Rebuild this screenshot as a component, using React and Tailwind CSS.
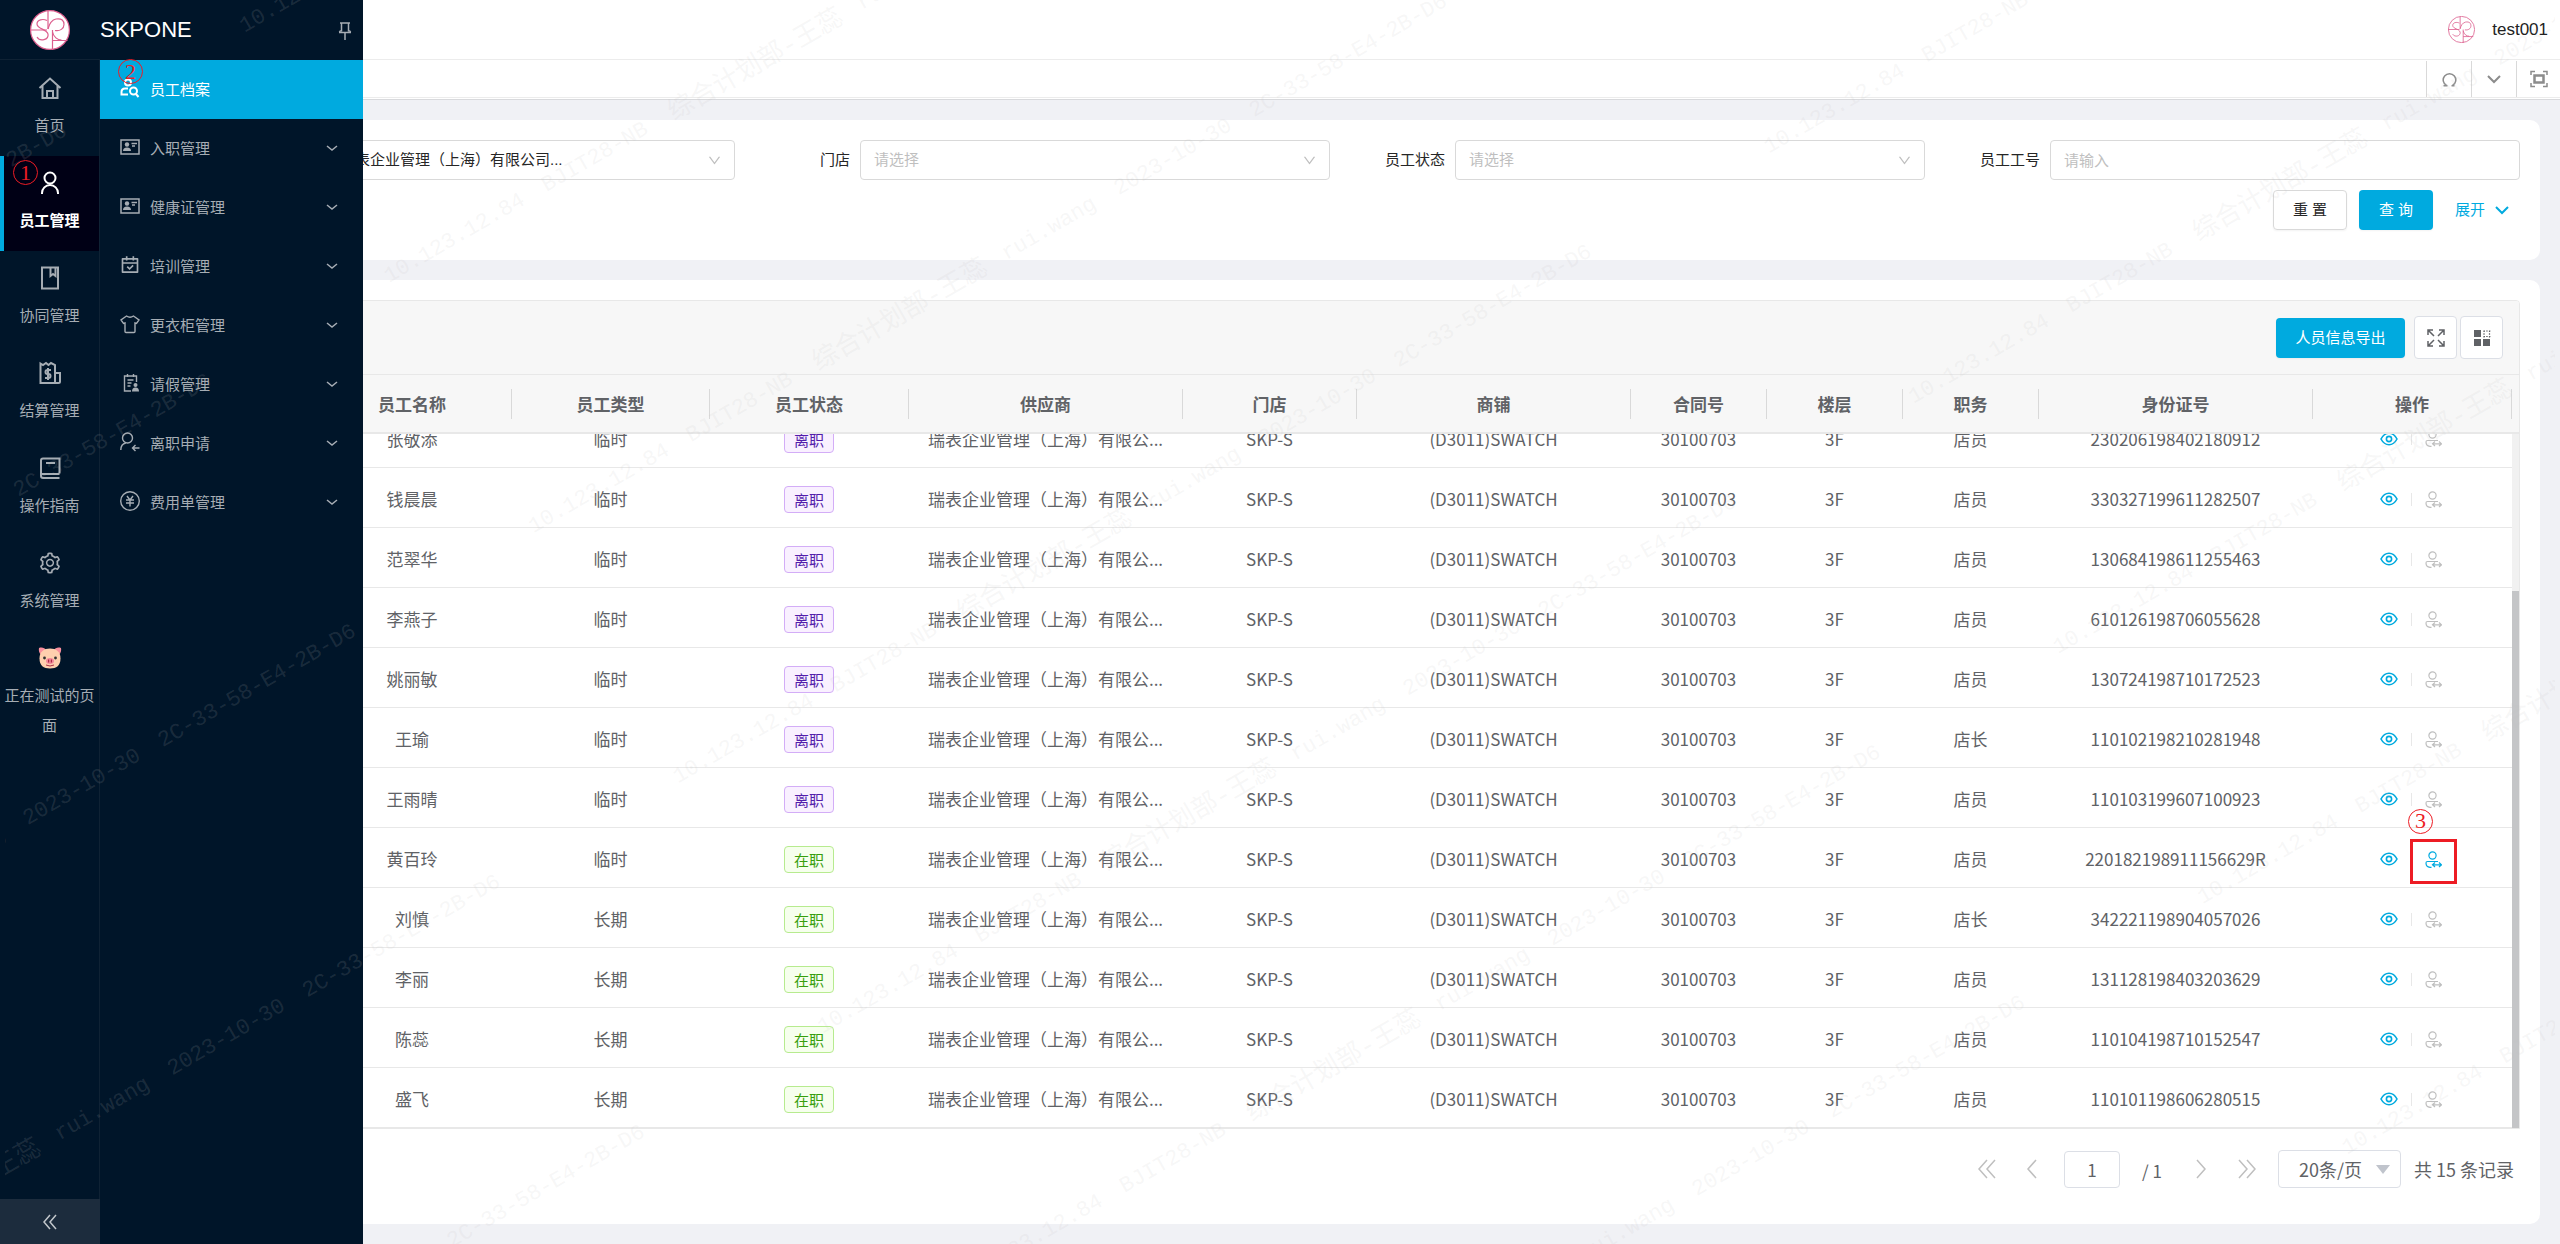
import React from "react";
import { AiOutlineSetting, AiOutlineDown } from "react-icons/ai";
import { RiCalendarCheckLine } from "react-icons/ri";

const rows = [
    ["张敬添", "临时", "离职", "店员", "230206198402180912"],
    ["钱晨晨", "临时", "离职", "店员", "330327199611282507"],
    ["范翠华", "临时", "离职", "店员", "130684198611255463"],
    ["李燕子", "临时", "离职", "店员", "610126198706055628"],
    ["姚丽敏", "临时", "离职", "店员", "130724198710172523"],
    ["王瑜", "临时", "离职", "店长", "110102198210281948"],
    ["王雨晴", "临时", "离职", "店员", "110103199607100923"],
    ["黄百玲", "临时", "在职", "店员", "220182198911156629R"],
    ["刘慎", "长期", "在职", "店长", "342221198904057026"],
    ["李丽", "长期", "在职", "店员", "131128198403203629"],
    ["陈蕊", "长期", "在职", "店员", "110104198710152547"],
    ["盛飞", "长期", "在职", "店员", "110101198606280515"],
];

const columns = ["员工名称", "员工类型", "员工状态", "供应商", "门店", "商铺", "合同号", "楼层", "职务", "身份证号", "操作"];

function Svg({ size = 24, box = 24, width = 2, children }) {
    return (
        <svg width={size} height={size} viewBox={`0 0 ${box} ${box}`} fill="none" stroke="currentColor" strokeWidth={width} aria-hidden="true">
            {children}
        </svg>
    );
}

function Logo({ size }) {
    return (
        <svg width={size} height={size} viewBox="0 0 40 40" fill="none" stroke="#dc5f8e" strokeWidth="1.200" aria-hidden="true">
            <circle cx="20" cy="20" r="19.400" fill="#fff" />
            <path d="M18 1v18M0 20h17M22.500 20v20M22.500 30.500h15" />
            <path d="M17 10.500c-4-2-10-1-10 3.500 0 5 10 5 11 10 1 6-8 8-11 3" />
            <path d="M18 19c1-4 3-9 8-10 6-1 8 2 8 5.500 0 4-4 7-9 6M22.500 22c1 5 5 8 9 8" />
        </svg>
    );
}

const icons = {
    home: (
        <Svg>
            <path d="M1.500 12 12 2.500 22.500 12M4.500 10v12h15V10M9 22v-7h6v7" />
        </Svg>
    ),
    user: (
        <Svg>
            <circle cx="12" cy="7" r="5.500" />
            <path d="M4 23v-1a8 8 0 0 1 16 0v1" />
        </Svg>
    ),
    bookmark: (
        <Svg>
            <path d="M4 1.500h16v21H4zM12.500 2v8l2.500-2 2.500 2V2" />
        </Svg>
    ),
    bill: (
        <Svg>
            <path d="M2.500 2.500 5 4l3-2 2.500 2 2.500-2 4 2v18H2.500zM17 12h5v8.500q0 1.500-1.500 1.500H17" />
            <path d="M13 9H9.500a1.500 1.500 0 0 0 0 4h1a1.500 1.500 0 0 1 0 4H7M10 7v12" />
        </Svg>
    ),
    book: (
        <Svg>
            <path d="M21.500 17.500V2.500H5q-2 0-2 2V20q0 2 2 2h16.500M3 18h18.500M8 7h9" />
        </Svg>
    ),
    setting: <AiOutlineSetting size={24} />,
    pig: (
        <svg width="24" height="24" viewBox="0 0 24 24" aria-hidden="true">
            <path d="M1 2c3-1 6 0 7 2L3 9C1 7 .500 4 1 2zM23 2c-3-1-6 0-7 2l5 5c2-2 2.500-5 2-7z" fill="#f98e9d" />
            <path d="M12 2.500c6 0 10.500 3 10.500 10 0 7-4 10-10.500 10s-10.500-3-10.500-10c0-7 4.500-10 10.500-10z" fill="#ffcfae" />
            <circle cx="6.500" cy="12" r="1.400" fill="#333" />
            <circle cx="17.500" cy="12" r="1.400" fill="#333" />
            <ellipse cx="12" cy="15" rx="4" ry="3" fill="#f4889a" />
            <path d="M10.600 13.500v3M13.400 13.500v3" stroke="#a92c45" strokeWidth="1.200" />
            <path d="M8 19q4 2 8 0" stroke="#a92c45" fill="none" />
        </svg>
    ),
    search: (
        <Svg size={20} box={20}>
            <circle cx="8" cy="4.500" r="3" />
            <path d="M8 10.500H5q-3.500 0-3.500 3.500v2.500H8" />
            <circle cx="13.500" cy="13" r="3.500" />
            <path d="m16 16 2.500 3" />
        </Svg>
    ),
    card: (
        <Svg size={20} box={20} width={1.500}>
            <path d="M1 3h18v14H1zM11.500 6.500H17M12 9h3" />
            <circle cx="7" cy="7.500" r="2.200" fill="currentColor" stroke="none" />
            <path d="M3 14q0-3.500 4-3.500t4 3.500z" fill="currentColor" stroke="none" />
        </Svg>
    ),
    calendar: <RiCalendarCheckLine size={21} />,
    shirt: (
        <Svg size={20} box={20} width={1.400}>
            <path d="M6.500 2q3.500 2.500 7 0l5.500 4-2.500 3.500-1.500-.500V17.500q0 1-1 1H6q-1 0-1-1V9l-1.500.500L1 6z" />
        </Svg>
    ),
    leave: (
        <Svg size={20} box={20} width={1.400}>
            <path d="M11 18H4.500V3h12v6M7.500 7h6M7.500 10h4M7.500 13h3M7.500 1v3M13.500 1v3" />
            <circle cx="15.500" cy="12" r="2" fill="currentColor" stroke="none" />
            <path d="M12 18.500q0-4 3.500-4t3.500 4z" fill="currentColor" stroke="none" />
        </Svg>
    ),
    quit: (
        <Svg size={20} box={20} width={1.400}>
            <circle cx="7.500" cy="6" r="5" />
            <path d="M.800 18q0-6 5-7M19.500 16H13M15.500 13l-3 3 3 3" />
        </Svg>
    ),
    yuan: (
        <Svg size={20} box={20} width={1.400}>
            <circle cx="10" cy="10" r="9.300" />
            <path d="m7 5 3 4 3-4M6 9h8M6 12h8M10 9v6.500" />
        </Svg>
    ),
};

const modules = [
    ["home", "首页"],
    ["user", "员工管理"],
    ["bookmark", "协同管理"],
    ["bill", "结算管理"],
    ["book", "操作指南"],
    ["setting", "系统管理"],
    ["pig", "正在测试的页面"],
];

const menus = [
    ["search", "员工档案"],
    ["card", "入职管理"],
    ["card", "健康证管理"],
    ["calendar", "培训管理"],
    ["shirt", "更衣柜管理"],
    ["leave", "请假管理"],
    ["quit", "离职申请"],
    ["yuan", "费用单管理"],
];

// numbered red step marker
function Step({ n, className }) {
    return (
        <span className={`absolute z-10 flex h-[25px] w-[25px] items-center justify-center rounded-full border border-[#ed1c24] font-['Liberation_Serif',serif] text-[22px] leading-none font-normal text-[#ed1c24] ${className}`}>
            {n}
        </span>
    );
}

function Sidebar() {
    return (
        <aside className="relative z-20 flex w-[100px] shrink-0 flex-col bg-[#001529] text-[15px] text-[#a6adb4]">
            <div className="flex h-[60px] items-center justify-center border-b border-[#0f2234]">
                <Logo size={40} />
            </div>
            <nav className="flex-1 border-r border-[#0f2234] pt-px">
                {modules.map(([icon, label], i) => (
                    <a
                        key={label}
                        href="#"
                        className={
                            i === 1
                                ? "relative flex min-h-[95px] flex-col items-center bg-[#000015] pt-[15px] font-bold text-white"
                                : "flex min-h-[95px] flex-col items-center px-1 pt-[15px]"
                        }
                    >
                        {i === 1 && <span className="absolute inset-y-0 left-0 w-1 bg-[#00aadf]" />}
                        {i === 1 && <Step n="1" className="top-[4px] left-[13px]" />}
                        {icons[icon]}
                        <span className="mt-[11px] text-center leading-[30px]">{label}</span>
                    </a>
                ))}
            </nav>
            <button aria-label="收起" className="flex h-[45px] items-center justify-center bg-[#1c2c3d] text-[#c2c7cc]">
                <Svg size={18} box={18} width={1.500}>
                    <path d="M9 2 3 9l6 7M15 2 9 9l6 7" />
                </Svg>
            </button>
            <div className="absolute inset-y-0 left-full w-[263px] bg-[#001529]">
                <div className="flex h-[60px] items-center justify-between border-b border-[#001529] pr-[9px]">
                    <h1 className="text-[22px] leading-[30px] text-white">SKPONE</h1>
                    <button aria-label="固定" className="pt-[2px]">
                        <Svg size={18} box={18} width={1.500}>
                            <path d="M4 1h10M5.500 1v8.500M12.500 1v8.500M3 10.500h12M3.500 10q0-1 2-1.500M14.500 10q0-1-2-1.500M9 11v7" />
                        </Svg>
                    </button>
                </div>
                <nav>
                    {menus.map(([icon, label], i) => (
                        <a
                            key={label}
                            href="#"
                            className={
                                i === 0
                                    ? "relative flex h-[59px] items-center bg-[#00aadf] px-5 pt-px text-white"
                                    : "flex h-[59px] items-center pt-px pr-[25px] pl-5"
                            }
                        >
                            {i === 0 && <Step n="2" className="-top-px left-[18px]" />}
                            <span className="mr-[10px] flex w-5 justify-center pb-1">{icons[icon]}</span>
                            <span className="flex-1">{label}</span>
                            {i > 0 && (
                                <Svg size={12} box={12} width={1.500}>
                                    <path d="m1 3 5 4 5-4" />
                                </Svg>
                            )}
                        </a>
                    ))}
                </nav>
            </div>
        </aside>
    );
}

function TopBar() {
    return (
        <>
            <header className="flex h-[60px] items-center justify-end border-b border-[#ececec] bg-white pr-3">
                <Logo size={27} />
                <span className="ml-[17px] text-[17px] text-[#222]">test001</span>
            </header>
            <div className="flex h-[40px] items-start justify-end border-b border-[#d8d9dc] bg-white pt-px text-[#8c8c8c]">
                <div className="flex h-[37px] w-full justify-end border-b border-[#ececec]">
                    <button aria-label="刷新" className="flex w-[45px] items-center justify-center border-l border-[#d9d9d9]">
                        <Svg size={15} box={15} width={1.500}>
                            <path d="M4.500 13.500a6.300 6.300 0 1 1 6 0M1.500 13.700h4M9.500 13.700h3" />
                        </Svg>
                    </button>
                    <button aria-label="更多" className="flex w-[45px] items-center justify-center border-l border-[#d9d9d9]">
                        <Svg size={14} box={14}>
                            <path d="m1 4 6 6 6-6" />
                        </Svg>
                    </button>
                    <button aria-label="全屏" className="flex w-[44px] items-center justify-center border-l border-[#d9d9d9]">
                        <Svg size={18} box={18} width={1.500}>
                            <path d="M1 5V1.500h4M13 1.500h4V5M17 13v3.500h-4M5 16.500H1V13" />
                            <path d="M4.500 5.500h9v7h-9z" strokeWidth="2.500" />
                        </Svg>
                    </button>
                </div>
            </div>
        </>
    );
}

function SelectField({ id, label, value, className = "pl-[13px] text-[#bfbfbf]" }) {
    return (
        <div className="flex items-center">
            <label htmlFor={id} className="w-[125px] shrink-0 pr-[10px] text-right">{label}</label>
            <div className="relative flex-1">
                <select id={id} className={`h-10 w-full appearance-none rounded border border-[#d9d9d9] bg-white pr-10 ${className}`}>
                    <option>{value}</option>
                </select>
                <AiOutlineDown size={15} className="pointer-events-none absolute top-[13px] right-[13px] text-[#bfbfbf]" />
            </div>
        </div>
    );
}

function FilterCard() {
    return (
        <section className="h-[140px] rounded-[10px] bg-white p-5 text-[15px] text-[#262626]">
            <div className="grid grid-cols-4">
                <SelectField id="supplier" label="供应商" value="瑞表企业管理（上海）有限公司..." className="pl-[74px]" />
                <SelectField id="store" label="门店" value="请选择" />
                <SelectField id="state" label="员工状态" value="请选择" />
                <div className="flex items-center">
                    <label htmlFor="code" className="w-[125px] shrink-0 pr-[10px] text-right">员工工号</label>
                    <input id="code" placeholder="请输入" className="h-10 min-w-0 flex-1 rounded border border-[#d9d9d9] px-[13px] placeholder:text-[#bfbfbf]" />
                </div>
            </div>
            <div className="mt-[10px] flex items-center justify-end pr-[11px]">
                <button className="h-10 w-[74px] rounded border border-[#d9d9d9] shadow-xs">重 置</button>
                <button className="ml-3 h-10 w-[74px] rounded bg-[#00aadf] text-white shadow-xs">查 询</button>
                <button className="ml-[22px] flex items-center gap-[10px] text-[#00aadf]">
                    展开
                    <Svg size={14} box={14}>
                        <path d="m1 4 6 6 6-6" />
                    </Svg>
                </button>
            </div>
        </section>
    );
}

function Cols() {
    return (
        <colgroup>
            <col />
            <col className="w-[199px]" />
            <col className="w-[198px]" />
            <col className="w-[199px]" />
            <col className="w-[274px]" />
            <col className="w-[174px]" />
            <col className="w-[274px]" />
            <col className="w-[136px]" />
            <col className="w-[136px]" />
            <col className="w-[136px]" />
            <col className="w-[274px]" />
            <col className="w-[199px]" />
        </colgroup>
    );
}

function Row({ row }) {
    const [name, type, state, job, idNo] = row;
    const active = name === "黄百玲";
    return (
        <tr className="h-[60px] border-b border-[#e8e8e8] *:pt-[3px] *:pr-px">
            <td />
            <td>{name}</td>
            <td>{type}</td>
            <td>
                <span
                    className={
                        state === "离职"
                            ? "inline-block h-[27px] w-[50px] rounded border border-[#d3adf7] bg-[#f9f0ff] align-middle text-[15px] leading-[25px] text-[#531dab]"
                            : "inline-block h-[27px] w-[50px] rounded border border-[#b7eb8f] bg-[#f6ffed] align-middle text-[15px] leading-[25px] text-[#389e0d]"
                    }
                >
                    {state}
                </span>
            </td>
            <td>瑞表企业管理（上海）有限公...</td>
            <td>SKP-S</td>
            <td>(D3011)SWATCH</td>
            <td>30100703</td>
            <td>3F</td>
            <td>{job}</td>
            <td>{idNo}</td>
            <td>
                <div className="flex items-center justify-center pr-[2px]">
                    <button aria-label="查看" className="text-[#00aadf]">
                        <Svg size={18} box={18} width={1.600}>
                            <path d="M1 9q3-5.700 8-5.700T17 9q-3 5.700-8 5.700T1 9z" />
                            <circle cx="9" cy="9" r="2.600" />
                        </Svg>
                    </button>
                    <span className="mx-[13px] h-[13px] w-px bg-[#e8e8e8]" />
                    <button aria-label="变更" className={active ? "relative text-[#00aadf]" : "relative text-[#bfbfbf]"}>
                        <Svg size={17} box={17} width={1.200}>
                            <circle cx="7.500" cy="4.500" r="3.600" />
                            <path d="M13 10.500H2.500q-1.500 0-1.500 1.500 0 4 4 4.300h1.500M7.500 13.800h9M10 11.500l-2.500 2.300L10 16M14 11.500l2.500 2.300L14 16" />
                        </Svg>
                        {active && <Step n="3" className="-top-[42px] -left-[17px]" />}
                        {active && <span className="absolute -top-3 -left-[15px] z-10 h-[45px] w-[47px] border-[3px] border-[#ed1c24]" />}
                    </button>
                </div>
            </td>
        </tr>
    );
}

function Pagination() {
    return (
        <div className="mt-5 flex h-10 items-center justify-end pr-[6px] text-[17px] text-[#606266]">
            <button aria-label="首页" className="mr-[9px] flex w-9 justify-center text-[#bfbfbf]">
                <Svg size={20} box={20} width={1.500}>
                    <path d="M10 1 2 10l8 9M18 1l-8 9 8 9" />
                </Svg>
            </button>
            <button aria-label="上一页" className="mr-[14px] flex w-9 justify-center text-[#bfbfbf]">
                <Svg size={20} box={20} width={1.500}>
                    <path d="m14 1-8 9 8 9" />
                </Svg>
            </button>
            <input aria-label="页码" defaultValue="1" className="h-[37px] w-14 rounded border border-[#dcdfe6] text-center" />
            <span className="ml-[22px] pt-1">/ 1</span>
            <button aria-label="下一页" className="mr-[10px] ml-[21px] flex w-9 justify-center text-[#bfbfbf]">
                <Svg size={20} box={20} width={1.500}>
                    <path d="m6 1 8 9-8 9" />
                </Svg>
            </button>
            <button aria-label="末页" className="mr-[13px] flex w-9 justify-center text-[#bfbfbf]">
                <Svg size={20} box={20} width={1.500}>
                    <path d="m2 1 8 9-8 9M10 1l8 9-8 9" />
                </Svg>
            </button>
            <div className="relative">
                <select aria-label="每页条数" className="h-[38px] w-[123px] appearance-none rounded border border-[#dcdfe6] bg-white pl-5 text-lg">
                    <option>20条/页</option>
                </select>
                <svg width="14" height="9" viewBox="0 0 14 9" className="pointer-events-none absolute top-[15px] right-[11px]" aria-hidden="true">
                    <path d="M0 0h14L7 9z" fill="#c0c4cc" />
                </svg>
            </div>
            <span className="ml-[13px] text-lg">共 15 条记录</span>
        </div>
    );
}

function TableCard() {
    return (
        <section className="flex-1 rounded-[10px] bg-white p-5 font-['Noto_Sans_CJK_SC',sans-serif]">
            <div className="overflow-hidden rounded-t border border-[#e8e8e8] text-center text-[17px] leading-6 text-[#606266]">
                <div className="flex h-[74px] items-center justify-end border-b border-[#e8e8e8] bg-[#f7f7f7] pr-4">
                    <button className="mr-[9px] h-10 w-[129px] rounded bg-[#00aadf] pb-[2px] text-[15px] text-white shadow-xs">人员信息导出</button>
                    <button aria-label="最大化" className="mr-[3px] flex h-[43px] w-[43px] items-center justify-center rounded border border-[#dcdfe6] bg-white">
                        <Svg size={18} box={18} width={1.500}>
                            <path d="M1 6V1h5M1 1l6 6M12 1h5v5M17 1l-6 6M1 12v5h5M1 17l6-6M17 12v5h-5M17 17l-6-6" />
                        </Svg>
                    </button>
                    <button aria-label="列设置" className="flex h-[43px] w-[43px] items-center justify-center rounded border border-[#dcdfe6] bg-white">
                        <Svg size={18} box={18} width={1.500}>
                            <path d="M1 1h7v7H1zM1 10h7v7H1zM10 10h7v7h-7z" fill="currentColor" stroke="none" />
                            <path d="M10.500 2h7M10.500 7.500h7M11 1.500v7M16.500 1.500v7" strokeWidth="1.200" strokeDasharray="1.500 1.200" />
                        </Svg>
                    </button>
                </div>
                <div className="border-b-2 border-[#e8e8e8] bg-[#f7f7f7] pr-[7px]">
                    <table className="w-full table-fixed">
                        <Cols />
                        <thead>
                            <tr className="h-[57px]">
                                <td />
                                {columns.map((c) => (
                                    <th key={c} scope="col" className="p-0">
                                        <div className="flex h-[30px] items-center justify-center border-r border-[#d9d9d9]">{c}</div>
                                    </th>
                                ))}
                            </tr>
                        </thead>
                    </table>
                </div>
                {/* body is scrolled to its end */}
                <div className="flex h-[694px]">
                    <div className="flex flex-1 flex-col justify-end overflow-hidden">
                        <table className="w-full table-fixed">
                            <Cols />
                            <tbody>
                                {rows.map((row) => (
                                    <Row key={row[4]} row={row} />
                                ))}
                            </tbody>
                        </table>
                    </div>
                    <div className="flex w-[7px] flex-col justify-end bg-[#f1f1f1]">
                        <div className="h-[537px] bg-[#c4c5c7]" />
                    </div>
                </div>
            </div>
            <Pagination />
        </section>
    );
}

function Watermark() {
    return (
        <div aria-hidden="true" className="pointer-events-none absolute inset-y-0 right-[5px] left-[5px] z-30 overflow-hidden">
            <div className="absolute top-0 left-0 w-0 origin-top-left -rotate-30">
                <div className="-ml-[1069px] font-['Liberation_Mono','Noto_Sans_CJK_SC',monospace] text-[22px] leading-none text-[#c0c0c0]/14">
                    {[0, 1, 2, 3, 4, 5, 6, 7, 8].map((line) => (
                        <div key={line} className="flex h-[285px] items-center even:h-[293px]">
                            {[0, 1, 2].map((n) => (
                                <div key={n} className="flex w-[1260px] shrink-0 items-center whitespace-nowrap">
                                    <span className="w-[182px] shrink-0">10.123.12.84</span>
                                    <span className="w-[146px] shrink-0">BJIT28-NB</span>
                                    <span className="w-[218px] shrink-0 text-[26px]">综合计划部-王蕊</span>
                                    <span className="w-[130px] shrink-0">rui.wang</span>
                                    <span className="w-[156px] shrink-0">2023-10-30</span>
                                    <span>2C-33-58-E4-2B-D6</span>
                                </div>
                            ))}
                        </div>
                    ))}
                </div>
            </div>
        </div>
    );
}

function App() {
    return (
        <div lang="zh-CN" className="relative flex min-h-screen overflow-hidden bg-[#f0f1f5] font-['Liberation_Sans','Noto_Sans_CJK_SC',sans-serif]">
            <Sidebar />
            <div className="flex min-w-0 flex-1 flex-col">
                <TopBar />
                <main className="flex flex-1 flex-col gap-5 p-5">
                    <FilterCard />
                    <TableCard />
                </main>
            </div>
            <Watermark />
        </div>
    );
}

export default App;
